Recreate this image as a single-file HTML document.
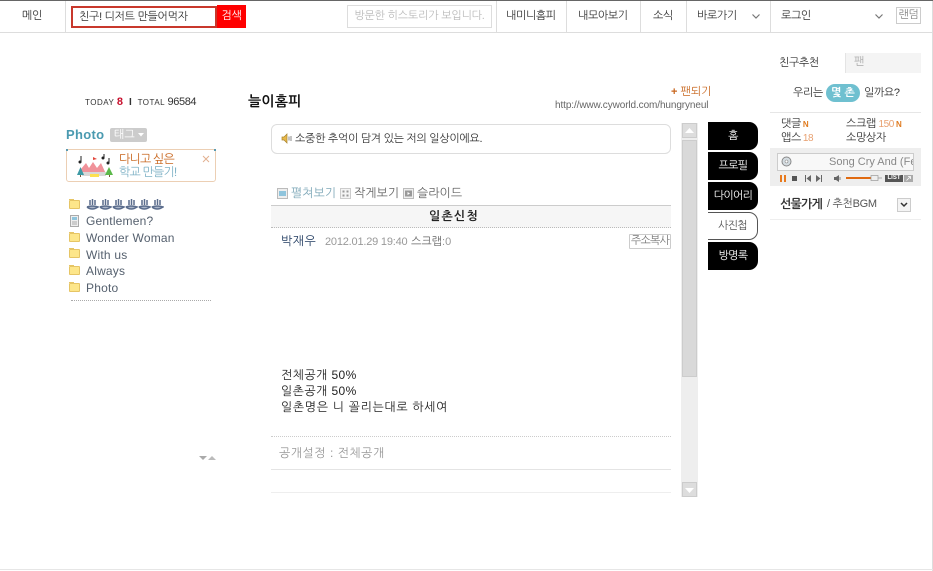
<!DOCTYPE html>
<html><head><meta charset="utf-8">
<style>
html,body{margin:0;padding:0;background:#fff;width:933px;height:571px;overflow:hidden}
body{position:relative;font-family:"Liberation Sans","NanumGothic","Noto Sans CJK KR",sans-serif;font-size:11px;color:#333}
.a{position:absolute;white-space:nowrap;line-height:14px}
.b{position:absolute;white-space:nowrap}
.n{letter-spacing:-.4px}
.tab{position:absolute;left:708px;width:50px;height:28px;background:#000;color:#fff;border-radius:0 9px 9px 0;text-align:center;line-height:28px;font-size:11px;letter-spacing:-.7px}
.f{position:absolute;left:69px;width:11px;height:9px;background:#fde68a;border:1px solid #e6c565;box-sizing:border-box;border-radius:1px}
.f:before{content:"";position:absolute;left:-1px;top:-2px;width:5px;height:1px;background:#e6c565}
.li{left:86px;color:#55606e;letter-spacing:.2px;font-size:12px}
</style></head><body>
<div class="b" style="left:0;top:0;width:933px;height:1px;background:#666"></div>
<div class="b" style="left:0;top:32px;width:933px;height:1px;background:#ddd"></div>
<div class="b" style="left:932px;top:1px;width:1px;height:570px;background:#ddd"></div>
<div class="b" style="left:0;top:569px;width:933px;height:1px;background:#e6e6e6"></div>
<div class="b" style="left:65px;top:1px;width:1px;height:31px;background:#ddd"></div>
<div class="b" style="left:496px;top:1px;width:1px;height:31px;background:#ddd"></div>
<div class="b" style="left:566px;top:1px;width:1px;height:31px;background:#ddd"></div>
<div class="b" style="left:640px;top:1px;width:1px;height:31px;background:#ddd"></div>
<div class="b" style="left:686px;top:1px;width:1px;height:31px;background:#ddd"></div>
<div class="b" style="left:770px;top:1px;width:1px;height:31px;background:#ddd"></div>

<div class="a n" style="left:22px;top:9px">메인</div>
<div class="b" style="left:71px;top:6px;width:146px;height:22px;border:2px solid #c8382c;box-sizing:border-box"></div>
<div class="a" style="left:79px;top:10px;letter-spacing:-.3px">친구! 디저트 만들어먹자</div>
<div class="b n" style="left:217px;top:5px;width:29px;height:23px;background:#f00;color:#fff;text-align:center;line-height:23px">검색</div>
<div class="b" style="left:347px;top:5px;width:145px;height:23px;border:1px solid #ddd;box-sizing:border-box;color:#bbb;text-align:center;line-height:21px;letter-spacing:-.2px">방문한 히스토리가 보입니다.</div>
<div class="a n" style="left:506px;top:9px">내미니홈피</div>
<div class="a n" style="left:578px;top:9px">내모아보기</div>
<div class="a n" style="left:653px;top:9px">소식</div>
<div class="a n" style="left:697px;top:9px">바로가기</div>
<svg class="b" style="left:751px;top:13px" width="10" height="7"><path d="M1.500 1.500L5 5L8.500 1.500" fill="none" stroke="#777" stroke-width="1.200"/></svg>
<div class="a n" style="left:781px;top:9px">로그인</div>
<svg class="b" style="left:874px;top:13px" width="10" height="7"><path d="M1.500 1.500L5 5L8.500 1.500" fill="none" stroke="#777" stroke-width="1.200"/></svg>
<div class="b n" style="left:896px;top:7px;width:25px;height:17px;border:1px solid #ccc;box-sizing:border-box;color:#888;text-align:center;line-height:14px">랜덤</div>

<div class="a" style="left:85px;top:95px;font-size:8px;letter-spacing:.5px;color:#333">TODAY <span style="color:#c8102e;font-size:11px;font-weight:bold">8</span> &nbsp;<span style="font-size:10px;font-weight:bold">I</span>&nbsp; TOTAL <span style="font-size:11px;letter-spacing:-.4px">96584</span></div>
<div class="a" style="left:66px;top:128px;font-weight:bold;font-size:13px;color:#4a9ab0;letter-spacing:.3px">Photo</div>
<div class="b" style="left:110px;top:128px;width:37px;height:14px;background:#ccc;border-radius:2px;color:#fff;font-size:11px;line-height:14px;padding-left:4px;box-sizing:border-box">태그</div>
<svg class="b" style="left:138px;top:133px" width="6" height="4"><path d="M0 0H6L3 3.500Z" fill="#fff"/></svg>

<div class="b" style="left:66px;top:149px;width:150px;height:33px;border:1px solid #eccfb4;border-radius:3px;box-sizing:border-box"></div>
<div class="b" style="left:66px;top:149px;width:2px;height:2px;background:#5a9ab0"></div>
<div class="b" style="left:214px;top:149px;width:2px;height:2px;background:#5a9ab0"></div>
<svg class="b" style="left:76px;top:154px" width="38" height="26">
<path d="M5 20V15L10 9L13 14L17 8L21 14L25 9L30 20Z" fill="#f0929a"/>
<rect x="6" y="18" width="24" height="4" fill="#d8d8d8"/>
<rect x="14" y="20" width="9" height="3" fill="#fde050"/>
<path d="M1 21L4.500 13L8 21Z" fill="#3d9aa5"/><path d="M29 21L33 13L37 21Z" fill="#5cb84a"/>
<rect x="4" y="21" width="1" height="2" fill="#7a5a3a"/><rect x="33" y="21" width="1" height="2" fill="#7a5a3a"/>
<path d="M17 8V3L21 5L17 6" fill="#e2453a"/>
<circle cx="4" cy="8" r="1.500" fill="#222"/><path d="M5 8V2" stroke="#222"/>
<circle cx="27" cy="4" r="1.500" fill="#222"/><path d="M28 4V0" stroke="#222"/>
<circle cx="32" cy="9" r="1.500" fill="#222"/><path d="M33 9V4" stroke="#222"/>
</svg>
<div class="a" style="left:119px;top:152px;color:#c8661e;font-size:12px;letter-spacing:-.8px">다니고 싶은</div>
<div class="a" style="left:119px;top:165px;color:#7fb2c6;font-size:12px;letter-spacing:-.8px">학교 만들기!</div>
<svg class="b" style="left:202px;top:155px" width="8" height="8"><path d="M1 1L7 7M7 1L1 7" stroke="#e2b190" stroke-width="1"/></svg>

<div class="f" style="top:200px"></div>
<svg class="b" style="left:86px;top:197px" width="78" height="14" fill="#a9b4c8" stroke="#5a6c8c" stroke-width="1.500">
<path d="M1 10Q6 14 12 10Q6 8 1 10M4 8V3M6.500 8V2M9 8V3"/>
<path d="M14 10Q19 14 25 10Q19 8 14 10M17 8V3M19.500 8V2M22 8V3"/>
<path d="M27 10Q32 14 38 10Q32 8 27 10M30 8V3M32.500 8V2M35 8V3"/>
<path d="M40 10Q45 14 51 10Q45 8 40 10M43 8V3M45.500 8V2M48 8V3"/>
<path d="M53 10Q58 14 64 10Q58 8 53 10M56 8V3M58.500 8V2M61 8V3"/>
<path d="M66 10Q71 14 77 10Q71 8 66 10M69 8V3M71.500 8V2M74 8V3"/>
</svg>
<svg class="b" style="left:70px;top:215px" width="9" height="12"><rect x=".5" y=".5" width="8" height="11" fill="#eee" stroke="#aaa"/><rect x="2" y="2" width="5" height="3" fill="#8fc4dc"/><path d="M2 7H7M2 9H7" stroke="#aaa"/></svg>
<div class="a li" style="top:214px">Gentlemen?</div>
<div class="f" style="top:233px"></div><div class="a li" style="top:231px">Wonder Woman</div>
<div class="f" style="top:249px"></div><div class="a li" style="top:248px">With us</div>
<div class="f" style="top:266px"></div><div class="a li" style="top:264px">Always</div>
<div class="f" style="top:283px"></div><div class="a li" style="top:281px">Photo</div>
<div class="b" style="left:71px;top:300px;width:140px;border-top:1px dotted #aaa"></div>
<svg class="b" style="left:199px;top:455px" width="18" height="6"><path d="M0 1H8L4 5Z" fill="#aaa"/><path d="M9 5H17L13 1Z" fill="#bbb"/></svg>

<div class="a" style="left:248px;top:94px;font-weight:bold;font-size:14px;color:#111;letter-spacing:.2px">늘이홈피</div>
<div class="a" style="left:671px;top:85px;color:#c8661e"><span style="font-weight:bold">+</span> 팬되기</div>
<div class="a" style="left:555px;top:99px;font-size:10px;color:#666;letter-spacing:-.1px">http://www.cyworld.com/hungryneul</div>

<div class="b" style="left:271px;top:124px;width:400px;height:30px;border:1px solid #ddd;border-radius:6px;box-sizing:border-box"></div>
<svg class="b" style="left:281px;top:133px" width="11" height="11"><path d="M1 4H3L6 1V10L3 7H1Z" fill="#e8b84a" stroke="#a8842c" stroke-width=".7"/><path d="M8 3.500V7.500M10 3V8" stroke="#888"/></svg>
<div class="a" style="left:295px;top:132px;letter-spacing:-.3px">소중한 추억이 담겨 있는 저의 일상이에요.</div>

<svg class="b" style="left:277px;top:188px" width="11" height="11"><rect x=".5" y=".5" width="10" height="10" fill="#eee" stroke="#bbb"/><rect x="2" y="3" width="7" height="5" fill="#8fc4dc"/></svg>
<div class="a" style="left:291px;top:186px;color:#7fa8b8;font-size:12px">펼쳐보기</div>
<svg class="b" style="left:340px;top:188px" width="11" height="11"><rect x=".5" y=".5" width="10" height="10" fill="#f4f4f4" stroke="#ccc"/><path d="M2.500 2.500h2v2h-2zM6.500 2.500h2v2h-2zM2.500 6.500h2v2h-2zM6.500 6.500h2v2h-2z" fill="#999"/></svg>
<div class="a" style="left:354px;top:186px;color:#666;font-size:12px">작게보기</div>
<svg class="b" style="left:403px;top:188px" width="11" height="11"><rect x=".5" y=".5" width="10" height="10" fill="#eee" stroke="#bbb"/><rect x="2" y="2.500" width="7" height="6" fill="#999"/><path d="M4.500 4L7 5.500L4.500 7Z" fill="#fff"/></svg>
<div class="a" style="left:417px;top:186px;color:#666;font-size:12px">슬라이드</div>

<div class="b" style="left:271px;top:205px;width:400px;height:23px;background:#f6f6f6;border-top:1px solid #ccc;border-bottom:1px dotted #bbb;box-sizing:border-box"></div>
<div class="a" style="left:429px;top:209px;font-size:12px;font-weight:bold;color:#222;letter-spacing:1.200px">일촌신청</div>
<div class="a" style="left:281px;top:234px;color:#1f3a5f;font-size:12px;letter-spacing:.5px">박재우</div>
<div class="a" style="left:325px;top:235px;font-size:11px;color:#999;letter-spacing:-.2px">2012.01.29 19:40</div>
<div class="a" style="left:411px;top:235px;font-size:11px;color:#666">스크랩<span style="color:#999">:0</span></div>
<div class="b" style="left:629px;top:234px;width:42px;height:15px;border:1px solid #ccc;box-sizing:border-box;border-radius:1px;font-size:11px;color:#777;text-align:center;line-height:13px;letter-spacing:-.8px">주소복사</div>

<div class="a" style="left:281px;top:368px;color:#222;font-size:12px;letter-spacing:.4px">전체공개 50%</div>
<div class="a" style="left:281px;top:384px;color:#222;font-size:12px;letter-spacing:.4px">일촌공개 50%</div>
<div class="a" style="left:281px;top:400px;color:#222;font-size:12px;letter-spacing:.65px">일촌명은 니 꼴리는대로 하세여</div>
<div class="b" style="left:271px;top:436px;width:400px;border-top:1px dotted #ccc"></div>
<div class="a" style="left:279px;top:446px;color:#999;font-size:12px;letter-spacing:.5px">공개설정 : 전체공개</div>
<div class="b" style="left:271px;top:469px;width:400px;height:1px;background:#e4e4e4"></div>
<div class="b" style="left:271px;top:492px;width:400px;height:1px;background:#eee"></div>

<div class="b" style="left:681px;top:123px;width:17px;height:374px;background:#eee"></div>
<div class="b" style="left:682px;top:123px;width:15px;height:15px;background:#ddd;border:1px solid #ccc;box-sizing:border-box"></div>
<svg class="b" style="left:685px;top:128px" width="9" height="5"><path d="M0 5H9L4.500 0Z" fill="#fff"/></svg>
<div class="b" style="left:682px;top:140px;width:15px;height:237px;background:#d9d9d9;border:1px solid #ccc;box-sizing:border-box"></div>
<div class="b" style="left:682px;top:482px;width:15px;height:15px;background:#ddd;border:1px solid #ccc;box-sizing:border-box"></div>
<svg class="b" style="left:685px;top:488px" width="9" height="5"><path d="M0 0H9L4.500 5Z" fill="#fff"/></svg>

<div class="tab" style="top:122px">홈</div>
<div class="tab" style="top:152px">프로필</div>
<div class="tab" style="top:182px">다이어리</div>
<div class="tab" style="top:212px;background:#fff;color:#555;border:1px solid #555;border-left:0;box-sizing:border-box;line-height:26px">사진첩</div>
<div class="tab" style="top:242px">방명록</div>

<div class="a n" style="left:779px;top:56px">친구추천</div>
<div class="b" style="left:845px;top:53px;width:76px;height:20px;background:#f4f4f4;border-left:1px solid #e4e4e4;box-sizing:border-box;color:#aaa;line-height:19px;padding-left:8px">팬</div>
<div class="a n" style="left:793px;top:86px">우리는</div>
<div class="b" style="left:826px;top:84px;width:34px;height:18px;background:#6fc0d0;border-radius:9px;color:#fff;font-weight:bold;text-align:center;line-height:18px;font-size:11px">몇 촌</div>
<div class="a n" style="left:864px;top:86px">일까요?</div>
<div class="b" style="left:770px;top:112px;width:151px;height:1px;background:#e6e6e6"></div>
<div class="a n" style="left:781px;top:117px">댓글<span style="color:#e07a1e;font-size:8px;font-weight:bold;margin-left:2px">N</span></div>
<div class="a n" style="left:846px;top:117px">스크랩 <span style="color:#e8a070;font-size:10px">150</span><span style="color:#e07a1e;font-size:8px;font-weight:bold;margin-left:2px">N</span></div>
<div class="a n" style="left:781px;top:131px">앱스<span style="color:#e8a070;font-size:10px;margin-left:2px">18</span></div>
<div class="a n" style="left:846px;top:131px">소망상자</div>

<div class="b" style="left:770px;top:148px;width:151px;height:38px;background:#eee"></div>
<div class="b" style="left:777px;top:153px;width:137px;height:18px;background:#f8f8f8;border:1px solid #ccc;box-sizing:border-box"></div>
<svg class="b" style="left:781px;top:156px" width="11" height="11"><circle cx="5.500" cy="5.500" r="4.500" fill="#d5dde2" stroke="#888"/><circle cx="5.500" cy="5.500" r="1.500" fill="#fff" stroke="#888" stroke-width=".6"/></svg>
<div class="a" style="left:829px;top:155px;width:84px;overflow:hidden;font-size:11px;color:#888">Song Cry And (Fe</div>
<svg class="b" style="left:779px;top:175px" width="135" height="10">
<path d="M1 0h2v7H1zM5 0h2v7H5z" fill="#e87a1e"/>
<rect x="13" y="1" width="5" height="5" fill="#555"/>
<path d="M26 0h1v7h-1zM32 0V7L27.500 3.500Z" fill="#666"/>
<path d="M37 0V7L41.500 3.500ZM42 0h1v7h-1z" fill="#666"/>
<path d="M55 2h2l3-2v7l-3-2h-2z" fill="#666"/><path d="M61 2v3" stroke="#888"/>
<rect x="67" y="2" width="25" height="2" fill="#e06a10"/><rect x="92" y="2" width="11" height="2" fill="#ccc"/>
<rect x="92" y="0.500" width="7" height="5" fill="#eee" stroke="#999" stroke-width=".7"/>
<rect x="106" y="0" width="18" height="7" fill="#555"/><rect x="125" y="0" width="9" height="7" fill="#aaa"/><path d="M127.500 5.500L131.500 1.500M129 1.500h2.500v2.500" stroke="#fff" fill="none" stroke-width=".8"/>
</svg>
<div class="a" style="left:885px;top:175px;width:18px;height:7px;color:#fff;font-size:6px;line-height:7px;font-weight:bold;text-align:center">LIST</div>

<div class="b" style="left:770px;top:197px;width:151px;height:23px;border-bottom:1px solid #eee;box-sizing:border-box"></div>
<div class="a" style="left:780px;top:197px;font-weight:bold;color:#333;font-size:12px;letter-spacing:-.8px">선물가게</div>
<div class="a" style="left:827px;top:197px;color:#555;font-size:11px;letter-spacing:-.3px">/ 추천BGM</div>
<div class="b" style="left:897px;top:198px;width:14px;height:14px;border:1px solid #ccc;background:#f4f4f4;box-sizing:border-box"></div>
<svg class="b" style="left:900px;top:202px" width="8" height="6"><path d="M1 1L4 4L7 1" fill="none" stroke="#333" stroke-width="1.500"/></svg>
</body></html>
